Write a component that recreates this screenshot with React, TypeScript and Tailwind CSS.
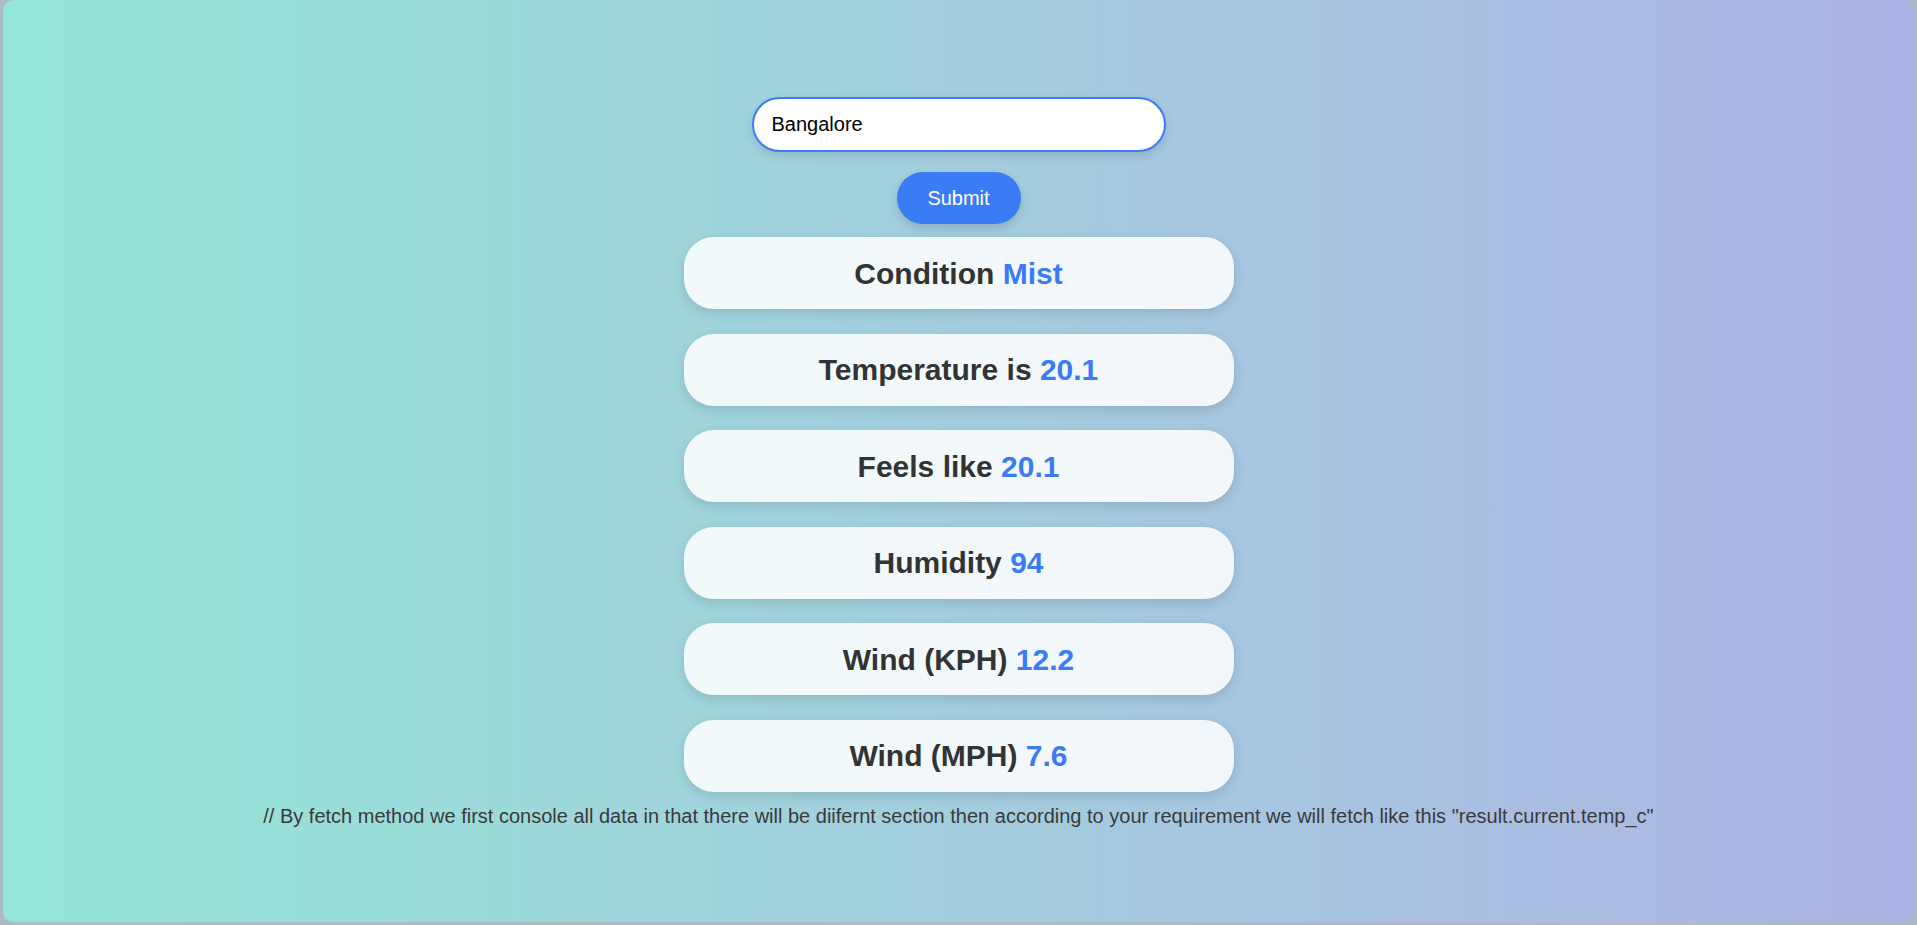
import { useState } from 'react'

const rows = [
  { label: 'Condition', value: 'Mist' },
  { label: 'Temperature is', value: '20.1' },
  { label: 'Feels like', value: '20.1' },
  { label: 'Humidity', value: '94' },
  { label: 'Wind (KPH)', value: '12.2' },
  { label: 'Wind (MPH)', value: '7.6' },
]

export default function App() {
  const [city, setCity] = useState('Bangalore')

  return (
    <div className="min-h-screen bg-[#aebbc6] px-[3px] pt-0 pb-[3px] font-['Liberation_Sans',Arial,sans-serif]">
      <div className="h-[922px] rounded-[10px] bg-gradient-to-r from-[#93e7d5] to-[#aeb3e5] flex flex-col items-center pt-[97px]">
        {/* Search */}
        <input
          type="text"
          value={city}
          onChange={(e) => setCity(e.target.value)}
          className="w-[414px] h-[55px] rounded-full border-2 border-[#3b7cf6] bg-white pl-[18px] text-[20px] text-black outline-none shadow-[0_4px_10px_rgba(0,0,0,0.12)]"
        />
        <button className="mt-[20px] w-[124px] h-[52px] rounded-full bg-[#3a7bf6] text-white text-[20px] shadow-[0_4px_10px_rgba(0,0,0,0.15)]">
          Submit
        </button>

        {/* Results */}
        <div className="mt-[13px] flex flex-col gap-[24.6px]">
          {rows.map((r) => (
            <div
              key={r.label}
              className="w-[550px] h-[72px] rounded-[30px] bg-white/[0.86] flex items-center justify-center shadow-[0_4px_12px_rgba(0,0,0,0.12)]"
            >
              <span className="text-[30px] font-bold text-[#333333]">
                {r.label} <span className="text-[#3a7bf6]">{r.value}</span>
              </span>
            </div>
          ))}
        </div>

        <p className="mt-[11px] text-[20px] leading-[26px] text-[#3a3a3a]">
          // By fetch method we first console all data in that there will be diifernt section then according to your requirement we will fetch like this "result.current.temp_c"
        </p>
      </div>
    </div>
  )
}
